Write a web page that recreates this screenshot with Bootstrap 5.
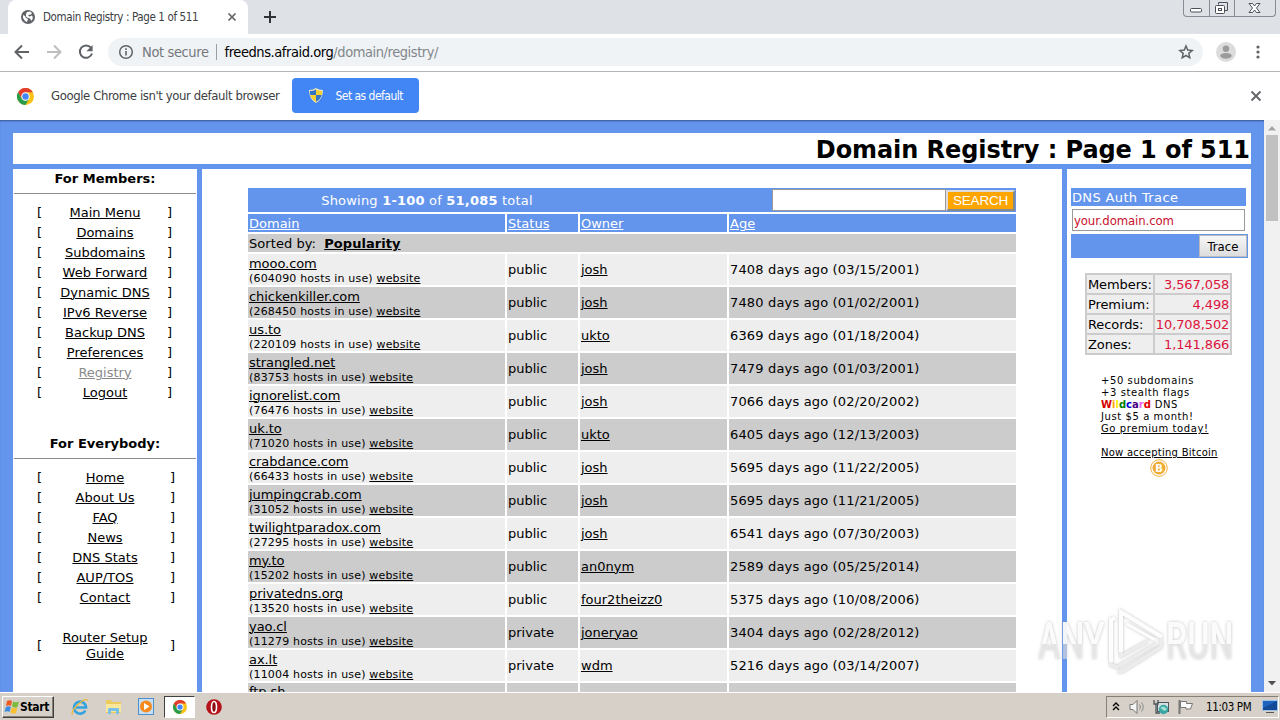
<!DOCTYPE html>
<html lang="en">
<head>
    <meta charset="UTF-8">
    <meta name="viewport" content="width=device-width, initial-scale=1.0">
    <title>Domain Registry : Page 1 of 511</title>
    <link href="https://cdn.jsdelivr.net/npm/bootstrap@5.3.3/dist/css/bootstrap.min.css" rel="stylesheet">
    <script src="https://cdn.jsdelivr.net/npm/bootstrap@5.3.3/dist/js/bootstrap.bundle.min.js"></script>
    <style>
        body { width: 1280px; height: 720px; font: 13px/16px "DejaVu Sans", sans-serif; color: #000; }
        svg { display: block; flex: none; }
        a { color: inherit; text-underline-offset: 1px; text-decoration-thickness: 1px; }
        a:hover { color: #c00; }

        /* browser chrome */
        .ui { font-family: "DejaVu Sans Condensed", "DejaVu Sans", sans-serif; font-stretch: condensed; color: #3c4043; }
        .tabstrip { height: 34px; background: #dee1e6; padding-left: 8px; }
        .tab { width: 240px; height: 34px; background: #fff; border-radius: 8px 8px 0 0; padding: 0 11px 0 13px; font-size: 11.5px; letter-spacing: -.38px; }
        .winbtns { width: 93px; height: 17px; border: 1px solid #868b95; border-top: 0; border-radius: 0 0 4px 4px; margin-right: 4px; }
        .winbtns div { width: 25px; height: 16px; }
        .winbtns div:last-child { width: 41px; }
        .winbtns div + div { border-left: 1px solid #868b95; }
        .toolbar { height: 38px; background: #fff; border-bottom: 1px solid #b4b5b7; padding: 0 14px 1px; }
        .omnibox { width: 1095px; height: 28px; border-radius: 14px; background: #f0f3f5; margin-left: 14px; padding: 0 9px 0 10px; font-size: 14.5px; color: #74787d; letter-spacing: -.38px; }
        .omnibox .sep { width: 1px; height: 16px; background: #9a9da1; margin: 0 8px 0 7px; }
        .url { color: #80868b; letter-spacing: -.43px; }
        .infobar { height: 48px; background: #fff; padding: 0 18px 0 17px; font-size: 13px; letter-spacing: -.4px; }
        .infobar .ask { margin-left: 17px; }
        .btn-default-browser { width: 127px; height: 35px; border-radius: 4px; background: #4285f4; color: #fff; font-size: 12px; letter-spacing: -.52px; margin: 0 0 1px 13px; padding: 0 0 0 17px; }
        .btn-default-browser span { margin-left: 12px; }

        /* web page */
        .viewport { height: 572px; background: #fff; overflow: hidden; }
        .page { width: 1264px; background: #6495ed; padding: 13px 13px 0; box-shadow: inset 0 2px 2px -1px #35558f; }
        .page h1 { height: 31px; background: #fff; margin: 0 0 5px; padding-right: 1px; font-size: 24px; line-height: 34px; font-weight: 700; letter-spacing: -.07px; white-space: nowrap; }
        .cols { gap: 5px; height: 560px; }
        .side { width: 184px; background: #fff; }
        .middle { width: 860px; background: #fff; padding: 17px 46px 0 44px; }
        .side h2 { font-size: 13px; line-height: 20px; font-weight: 700; margin: 0; height: 24px; text-align: center; }
        .side h2.second { margin-top: 31px; }
        .side hr { height: 1px; margin: 0 1px 9px; border: 0; background: #8c8c8c; opacity: 1; }
        .menu-row { height: 20px; padding: 0 25px 0 24px; }
        .menu-row.tall { height: 32px; margin-top: 22px; }
        .everybody .menu-row { padding-right: 22px; }
        .menu-row a { text-align: center; margin-left: 1px; }
        .everybody .menu-row a { margin: 0 2px 0 0; }
        .current { color: #8a8a8a; }

        .registry { width: 772px; table-layout: fixed; border-collapse: separate; border-spacing: 2px; }
        .registry td { padding: 0 1px; line-height: 15px; vertical-align: middle; white-space: nowrap; height: 31px; }
        .registry tr.bar td { background: #6495ed; color: #fff; height: 18px; line-height: 16px; padding-top: 2px; }
        .registry tr.bar td.finder { height: 24px; padding: 0; }
        .registry tr.sort td { background: #ccc; height: 18px; line-height: 16px; padding-top: 2px; letter-spacing: .06px; }
        .registry .odd td { background: #eee; }
        .registry .even td { background: #ccc; }
        .registry .hosts { font-size: 11px; line-height: 13px; letter-spacing: .18px; }
        .registry .host { padding-top: 1px; padding-bottom: 1px; line-height: 15px; letter-spacing: -.06px; }
        .registry .age { letter-spacing: .16px; }
        .finder .total { width: 358px; padding-top: 2px; letter-spacing: .2px; }
        .finder input { width: 174px; height: 22px; border: 1px solid #999; border-radius: 0; padding: 0 3px; }
        .search { width: 69px; height: 21px; border: 2px outset #ddd; background: #ffa500; color: #fff; font: 13.5px/17px "Liberation Sans", sans-serif; letter-spacing: -.2px; padding: 0; margin-right: 1px; }

        .trace { width: 175px; margin: 19px 0 0 4px; }
        .trace .cap { height: 18px; background: #6495ed; color: #fff; line-height: 20px; padding-left: 1px; letter-spacing: .36px; }
        .trace input { width: 173px; height: 22px; border: 1px solid #999; margin: 3px 0 0 1px; padding: 0 1px; color: #c8102e; font: 13px "DejaVu Sans Condensed", sans-serif; font-stretch: condensed; letter-spacing: -.1px; }
        .trace .foot { width: 177px; height: 24px; background: #6495ed; margin-top: 3px; padding: 1px; }
        .trace .foot button { width: 48px; height: 22px; border: 1px solid #bbb; background: linear-gradient(#f7f7f7, #ddd); padding: 0; font: 13px "DejaVu Sans Condensed", sans-serif; font-stretch: condensed; }
        .stats { width: 147px; border-collapse: collapse; margin: 15px 0 0 18px; letter-spacing: -.1px; }
        .stats td { height: 20px; border: 2px solid #ccc; background: #eee; padding: 2px 1px 0; line-height: 16px; white-space: nowrap; }
        .stats td + td { color: #dc143c; text-align: right; }
        .promo { margin: 20px 0 0 34px; font-size: 10px; line-height: 12px; letter-spacing: .58px; white-space: nowrap; }
        .promo b { letter-spacing: 0; }
        .promo .coin { letter-spacing: .25px; }
        .promo svg { margin-left: 49px; }

        .scroller { width: 16px; background: #f1f1f1; padding: 6px 0; }
        .scroller .thumb { width: 12px; height: 86px; background: #c1c1c1; }

        /* desktop */
        .taskbar { height: 28px; background: #d6d0c8; border-top: 1px solid #fff; padding: 2px 1px 2px 2px; font-size: 11.5px; color: #000; }
        .start { width: 52px; height: 22px; border: 1px solid; border-color: #fff #404040 #404040 #fff; box-shadow: inset -1px -1px #868076; font-weight: 700; font-size: 12px; letter-spacing: -.3px; padding-left: 1px; }
        .launch { gap: 16px; margin: 0 10px 0 17px; }
        .running { width: 31px; height: 22px; background: #fff; border: 1px solid; border-color: #404040 #fff #fff #404040; margin-right: 11px; }
        .tray { width: 173px; height: 22px; border: 1px solid; border-color: #868076 #fff #fff #868076; padding-left: 5px; gap: 7px; }
        .tray .speaker { margin-left: 2px; }
        .clock { margin-left: 5px; letter-spacing: -.38px; }
        .overlay-logo { position: absolute; left: 1030px; top: 600px; }
    </style>
</head>
<body class="overflow-hidden position-relative">

<!-- Tab strip -->
<div class="tabstrip ui d-flex">
    <div class="tab d-flex align-items-center">
        <svg width="14" height="14" viewBox="0 0 14 14"><circle cx="7" cy="7" r="7" fill="#5f6368"/><path d="M2 5l2 1 1 2 2 1-1 3-2-1-2-3zM6 2l3-.6 2 1.6-1 1.500-2 .2-1 1.300 2 .6 1.500-1 1.300 1.200-.4 3-1.400 1-.8-2.400L7 8 5 6.500 5 4z" fill="#fff"/></svg>
        <span class="ms-2 ps-0 flex-fill text-nowrap">Domain Registry : Page 1 of 511</span>
        <svg width="10" height="10" viewBox="0 0 10 10"><path d="M1.500 1.500l7 7m0-7l-7 7" stroke="#5f6368" stroke-width="1.700"/></svg>
    </div>
    <svg class="align-self-center ms-3" width="12" height="12" viewBox="0 0 12 12"><path d="M6 0v12M0 6h12" stroke="#303236" stroke-width="2"/></svg>
    <div class="winbtns d-flex ms-auto">
        <div><svg width="24" height="16"><rect x="6.500" y="8.500" width="11" height="3.500" rx="1" fill="#fff" stroke="#4b5058"/></svg></div>
        <div><svg width="24" height="16"><path d="M8.500 4.500v-2h9v8h-3" fill="none" stroke="#4b5058"/><rect x="5.500" y="5.500" width="9" height="8" rx="1" fill="#fff" stroke="#4b5058"/><rect x="8.500" y="8.500" width="3" height="2" fill="none" stroke="#4b5058"/></svg></div>
        <div><svg width="41" height="16"><path d="M14 3.500h3.500l2 2.500 2-2.500H25L21.500 8l3.500 4.500h-3.500l-2-2.500-2 2.500H14L17.500 8z" fill="#fff" stroke="#4b5058"/></svg></div>
    </div>
</div>

<!-- Toolbar -->
<div class="toolbar ui d-flex align-items-center">
    <svg width="16" height="16" viewBox="0 0 16 16" fill="none" stroke="#5f6368" stroke-width="2"><path d="M15 8H2.500M8 1.500L1.500 8 8 14.500"/></svg>
    <svg class="ms-3" width="16" height="16" viewBox="0 0 16 16" fill="none" stroke="#bcbec0" stroke-width="2"><path d="M1 8h12.500M8 1.500L14.500 8 8 14.500"/></svg>
    <svg class="ms-3" width="16" height="16" viewBox="0 0 16 16"><path d="M12.900 3.700A6.200 6.200 0 1 0 14 9.500" fill="none" stroke="#5f6368" stroke-width="2"/><path d="M14.600 1v6.200H8.400z" fill="#5f6368"/></svg>
    <div class="omnibox d-flex align-items-center">
        <svg width="16" height="16" viewBox="0 0 16 16"><circle cx="8" cy="8" r="6.300" fill="none" stroke="#5f6368" stroke-width="1.500"/><path d="M8 7v4.500M8 4.200v1.700" stroke="#5f6368" stroke-width="1.600"/></svg>
        <span class="ms-2">Not secure</span>
        <span class="sep"></span>
        <span class="url flex-fill"><span class="text-black">freedns.afraid.org</span>/domain/registry/</span>
        <svg width="16" height="16" viewBox="0 0 16 16"><path d="M8 2l1.700 4.100 4.500.4-3.400 2.900 1 4.400L8 11.500l-3.800 2.300 1-4.400L1.800 6.500l4.500-.4z" fill="none" stroke="#5f6368" stroke-width="1.500"/></svg>
    </div>
    <svg class="ms-auto" width="20" height="20" viewBox="0 0 20 20"><circle cx="10" cy="10" r="10" fill="#dcdcdc"/><circle cx="10" cy="6.700" r="3.200" fill="#9b9b9b"/><ellipse cx="10" cy="13.800" rx="5.800" ry="2.900" fill="#9b9b9b"/></svg>
    <svg class="ms-3 me-1" width="10" height="16" viewBox="0 0 10 16" fill="#5f6368"><circle cx="6" cy="3" r="1.600"/><circle cx="6" cy="8" r="1.600"/><circle cx="6" cy="13" r="1.600"/></svg>
</div>

<!-- Default browser bar -->
<div class="infobar ui d-flex align-items-center">
    <svg width="17" height="17" viewBox="0 0 48 48"><circle cx="24" cy="24" r="24" fill="#fbc116"/><path d="M3.200 12A24 24 0 0 1 44.800 12H24L13.600 30z" fill="#e33b2e"/><path d="M3.200 12A24 24 0 0 0 24 48L34.400 30 24 36 13.600 30z" fill="#2a9d4a"/><circle cx="24" cy="24" r="12" fill="#fff"/><circle cx="24" cy="24" r="9" fill="#4285f4"/></svg>
    <span class="ask text-nowrap">Google Chrome isn't your default browser</span>
    <button class="btn-default-browser border-0 d-flex align-items-center">
        <svg width="14" height="15" viewBox="0 0 14 15"><path d="M7 0q3 2 7 2 0 9-7 13Q0 11 0 2q4 0 7-2z" fill="#e9e5c4"/><path d="M7 1.500V7H1.300q-.5-2-.3-4Q4 3 7 1.500zM7 7h5.700Q11.500 11.500 7 13.800z" fill="#3474c4"/><path d="M7 1.500V7h5.700q.5-2 .3-4Q10 3 7 1.500zM7 7H1.300Q2.500 11.500 7 13.800z" fill="#f7cf32"/></svg>
        <span>Set as default</span>
    </button>
    <svg class="ms-auto" width="12" height="12" viewBox="0 0 12 12"><path d="M1.500 1.500l9 9m0-9l-9 9" stroke="#5f6368" stroke-width="1.800"/></svg>
</div>

<!-- Page -->
<div class="viewport d-flex">
    <div class="page">
        <h1 class="text-end">Domain Registry : Page 1 of 511</h1>
        <div class="cols d-flex">
            <nav class="side">
                <h2>For Members:</h2>
                <hr>
                <div id="members"></div>
                <h2 class="second">For Everybody:</h2>
                <hr>
                <div id="everybody" class="everybody"></div>
            </nav>

            <main class="middle">
                <table class="registry">
                    <colgroup><col style="width:257px"><col style="width:71px"><col style="width:147px"><col></colgroup>
                    <tbody id="rows">
                        <tr class="bar"><td class="finder" colspan="4">
                            <div class="d-flex align-items-center">
                                <div class="total text-center">Showing <b>1-100</b> of <b>51,085</b> total</div>
                                <input class="ms-auto" type="text" aria-label="Search"><button class="search">SEARCH</button>
                            </div>
                        </td></tr>
                        <tr class="bar"><td><a href="#">Domain</a></td><td><a href="#">Status</a></td><td><a href="#">Owner</a></td><td><a href="#">Age</a></td></tr>
                        <tr class="sort"><td colspan="4">Sorted by: <a class="fw-bold ms-1" href="#">Popularity</a></td></tr>
                    </tbody>
                </table>
            </main>

            <aside class="side">
                <div class="trace">
                    <div class="cap">DNS Auth Trace</div>
                    <input class="d-block" type="text" value="your.domain.com" aria-label="Domain to trace">
                    <div class="foot d-flex justify-content-end"><button>Trace</button></div>
                </div>
                <table class="stats">
                    <tr><td>Members:</td><td>3,567,058</td></tr>
                    <tr><td>Premium:</td><td>4,498</td></tr>
                    <tr><td>Records:</td><td>10,708,502</td></tr>
                    <tr><td>Zones:</td><td>1,141,866</td></tr>
                </table>
                <div class="promo">
                    +50 subdomains<br>
                    +3 stealth flags<br>
                    <b><span style="color:#d40000">W</span><span style="color:#ffa500">i</span><span style="color:#f4ee00">l</span><span style="color:#008000">d</span><span style="color:#0000d0">c</span><span style="color:#4b0082">a</span><span style="color:#ee60ee">r</span><span style="color:#e00000">d</span></b> DNS<br>
                    Just $5 a month!<br>
                    <a href="#">Go premium today!</a><br><br>
                    <a class="coin" href="#">Now accepting Bitcoin</a>
                    <svg width="18" height="18" viewBox="0 0 18 18"><circle cx="9" cy="9" r="8.300" fill="#fff" stroke="#f5b041"/><circle cx="9" cy="9" r="6.500" fill="#f0ad36"/><text x="9.300" y="12.600" text-anchor="middle" font-size="10" font-weight="700" fill="#fff">B</text></svg>
                </div>
            </aside>
        </div>
    </div>
    <div class="scroller d-flex flex-column align-items-center">
        <svg width="8" height="5" viewBox="0 0 8 5"><path d="M0 4.500L4 0l4 4.500z" fill="#a3a3a3"/></svg>
        <div class="thumb mt-1"></div>
        <svg class="mt-auto" width="8" height="5" viewBox="0 0 8 5"><path d="M0 0l4 4.500L8 0z" fill="#505050"/></svg>
    </div>
</div>

<!-- Taskbar -->
<div class="taskbar ui d-flex align-items-center">
    <div class="start d-flex align-items-center">
        <svg width="16" height="16" viewBox="0 0 16 16"><path d="M3 2q3-1.500 5 0L7 7Q5 5.500 2 7z" fill="#ee5a24"/><path d="M9 2.500q3 1.500 6 0L13.500 8q-3 1.500-5.500-.5z" fill="#7dbb3c"/><path d="M1.800 8q3-1.500 5 0l-1.300 5Q3.500 11.500.5 13z" fill="#3c8de0"/><path d="M7.800 8.500q2.500 1.500 5.500.3L12 14q-3 1.300-5.500-.5z" fill="#fbc02d"/></svg>
        <span>Start</span>
    </div>
    <div class="launch d-flex align-items-center">
        <svg width="18" height="18" viewBox="0 0 18 18"><path d="M14.300 12.500A6 6 0 1 1 15 9.500H5" fill="none" stroke="#35a2df" stroke-width="2.600"/><path d="M1.500 16.500C-1 13 13-1 16.800 2.300" fill="none" stroke="#eab93c" stroke-width="1.400"/></svg>
        <svg width="17" height="17" viewBox="0 0 17 17"><path d="M1 2h5l1 2h9v11H1z" fill="#eccb5c"/><path d="M1 6h15v8H1z" fill="#f9e79c"/><path d="M3 16v-5q0-1 1-1h9q1 0 1 1v5h-3v-3H6v3z" fill="#79c0e8"/></svg>
        <svg width="16" height="17" viewBox="0 0 16 17"><rect x=".5" y=".5" width="15" height="16" fill="#c7dff4" stroke="#4d90ca"/><circle cx="8" cy="8.500" r="6" fill="#f58a1e"/><path d="M6 5l5.500 3.500L6 12z" fill="#fff"/></svg>
    </div>
    <div class="running d-flex align-items-center justify-content-center">
        <svg width="14" height="14" viewBox="0 0 48 48"><circle cx="24" cy="24" r="24" fill="#fbc116"/><path d="M3.200 12A24 24 0 0 1 44.800 12H24L13.600 30z" fill="#e33b2e"/><path d="M3.200 12A24 24 0 0 0 24 48L34.400 30 24 36 13.600 30z" fill="#2a9d4a"/><circle cx="24" cy="24" r="12" fill="#fff"/><circle cx="24" cy="24" r="9" fill="#4285f4"/></svg>
    </div>
    <svg width="16" height="16" viewBox="0 0 16 16"><circle cx="8" cy="8" r="7.800" fill="#b5121b"/><ellipse cx="8" cy="8" rx="2.500" ry="5.500" fill="#8a0d12" stroke="#fff" stroke-width="1.600"/></svg>
    <div class="tray d-flex align-items-center ms-auto">
        <svg width="8" height="10" viewBox="0 0 8 10" fill="none" stroke="#000" stroke-width="1.300"><path d="M1 4l3-3 3 3M1 8l3-3 3 3"/></svg>
        <svg class="speaker" width="17" height="16" viewBox="0 0 17 16"><path d="M1 5.500h3l4-4v13l-4-4H1z" fill="#f5f5f5" stroke="#777"/><path d="M10.500 5.500q2 2.500 0 5M12.500 3.500q3.500 4.500 0 9" fill="none" stroke="#8a8a8a"/></svg>
        <svg width="17" height="16" viewBox="0 0 17 16"><rect x="4.500" y="3.500" width="11" height="9" fill="#d7e0e3" stroke="#4c565a"/><path d="M1 1v4h4V1M3 5v9h4" fill="none" stroke="#4c565a" stroke-width="1.300"/><circle cx="10.500" cy="10.500" r="4.700" fill="#3ba7a5"/><path d="M7.500 9q2-2.500 4-1t2.500 2q-2 3-4 1z" fill="#a3e0d5"/></svg>
        <svg width="17" height="16" viewBox="0 0 17 16"><path d="M2.500 1v14" stroke="#777" stroke-width="2"/><path d="M3.500 2.500h6v2h6l-2 5.500H9V8.500H3.500z" fill="#fafafa" stroke="#777"/></svg>
        <span class="clock text-nowrap">11:03 PM</span>
        <svg class="ms-auto" width="16" height="15" viewBox="0 0 16 15"><rect x=".5" y="1.500" width="15" height="10" fill="#1d62bd" stroke="#9ec3e8"/><path d="M1 9l14-7v9H1z" fill="#134995"/><path d="M4 13.500h8" stroke="#555"/></svg>
    </div>
</div>

<svg class="overlay-logo" width="210" height="80" viewBox="0 0 210 80">
    <defs>
        <linearGradient id="fade" x1="0" y1="0" x2="0" y2="1"><stop offset=".55" stop-color="#fff" stop-opacity=".9"/><stop offset=".55" stop-color="#e6e6e6" stop-opacity=".55"/></linearGradient>
        <filter id="halo"><feDropShadow dx="0" dy="0" stdDeviation="1.500" flood-color="#777" flood-opacity=".55"/></filter>
    </defs>
    <g filter="url(#halo)" font-family="Roboto, sans-serif" font-size="52" font-weight="500" fill="url(#fade)">
        <text transform="translate(8 59) scale(.65 1)">ANY</text>
        <text transform="translate(136 59) scale(.65 1)">RUN</text>
        <g fill="none" stroke-width="4" stroke="#fff" stroke-opacity=".95"><path d="M81 62V20l4-2M91 52V12l41 25"/><path d="M97 24l28 16" stroke-width="3"/><path d="M81 62v3l6 2 39-23M88 72l5-1 38-24V39M91 52v4l27-15" stroke="#ededed" stroke-width="3"/></g>
    </g>
</svg>

<script>
    const members = ["Main Menu", "Domains", "Subdomains", "Web Forward", "Dynamic DNS", "IPv6 Reverse", "Backup DNS", "Preferences", "Registry", "Logout"];
    const everybody = ["Home", "About Us", "FAQ", "News", "DNS Stats", "AUP/TOS", "Contact"];
    const domains = [
        ["mooo.com", 604090, "public", "josh", 7408, "03/15/2001"],
        ["chickenkiller.com", 268450, "public", "josh", 7480, "01/02/2001"],
        ["us.to", 220109, "public", "ukto", 6369, "01/18/2004"],
        ["strangled.net", 83753, "public", "josh", 7479, "01/03/2001"],
        ["ignorelist.com", 76476, "public", "josh", 7066, "02/20/2002"],
        ["uk.to", 71020, "public", "ukto", 6405, "12/13/2003"],
        ["crabdance.com", 66433, "public", "josh", 5695, "11/22/2005"],
        ["jumpingcrab.com", 31052, "public", "josh", 5695, "11/21/2005"],
        ["twilightparadox.com", 27295, "public", "josh", 6541, "07/30/2003"],
        ["my.to", 15202, "public", "an0nym", 2589, "05/25/2014"],
        ["privatedns.org", 13520, "public", "four2theizz0", 5375, "10/08/2006"],
        ["yao.cl", 11279, "private", "joneryao", 3404, "02/28/2012"],
        ["ax.lt", 11004, "private", "wdm", 5216, "03/14/2007"]
    ];

    function menuRow(label, extra) {
        const current = label === "Registry" ? "current" : "";
        return `<div class="menu-row d-flex align-items-center justify-content-between ${extra || ""}"><span>[</span><a class="${current}" href="#">${label}</a><span>]</span></div>`;
    }

    document.getElementById("members").innerHTML = members.map(m => menuRow(m)).join("");
    document.getElementById("everybody").innerHTML = everybody.map(m => menuRow(m)).join("") + menuRow("Router Setup<br>Guide", "tall");

    let html = "";
    domains.forEach((d, i) => {
        html += `<tr class="${i % 2 ? "even" : "odd"}">
            <td><div class="host"><a href="#">${d[0]}</a></div><div class="hosts">(${d[1]} hosts in use) <a href="#">website</a></div></td>
            <td>${d[2]}</td><td><a href="#">${d[3]}</a></td><td class="age">${d[4]} days ago (${d[5]})</td></tr>`;
    });
    html += `<tr class="even"><td class="align-top"><div class="host"><a href="#">ftp.sh</a></div></td><td></td><td></td><td></td></tr>`;
    document.getElementById("rows").insertAdjacentHTML("beforeend", html);
</script>

</body>
</html>
